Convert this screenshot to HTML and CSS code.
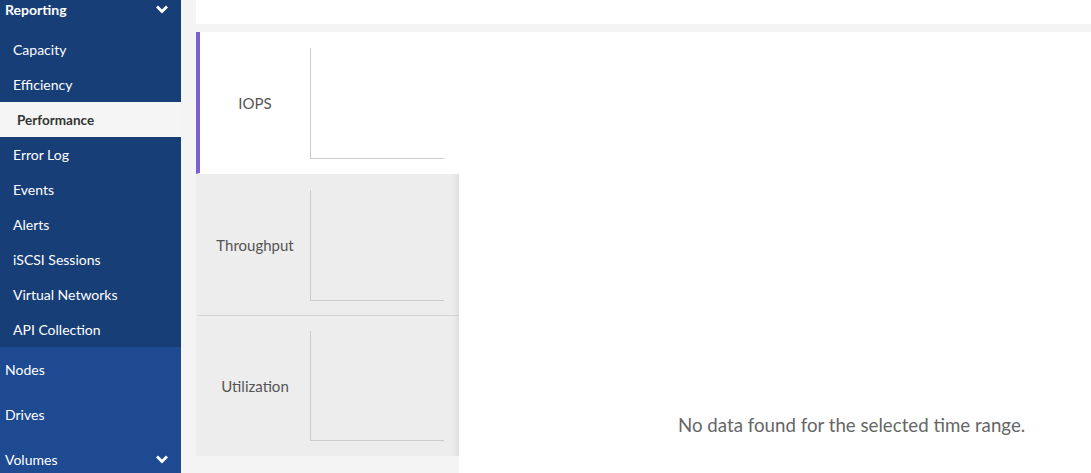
FILE: index.html
```html
<!DOCTYPE html>
<html>
<head>
<meta charset="utf-8">
<link rel="stylesheet" href="styles.css">
</head>
<body>
<aside class="sidebar">
  <nav class="nav">
    <div class="group">
      <div class="group-head"><span>Reporting</span>
        <svg class="chev" width="14" height="9" viewBox="0 0 14 9"><path d="M2 1.5 L7 6.5 L12 1.5" fill="none" stroke="#fff" stroke-width="2.8"/></svg>
      </div>
      <div class="sub">Capacity</div>
      <div class="sub">Efficiency</div>
      <div class="sub active">Performance</div>
      <div class="sub">Error Log</div>
      <div class="sub">Events</div>
      <div class="sub">Alerts</div>
      <div class="sub">iSCSI Sessions</div>
      <div class="sub">Virtual Networks</div>
      <div class="sub">API Collection</div>
    </div>
    <div class="top">Nodes</div>
    <div class="top">Drives</div>
    <div class="top"><span>Volumes</span>
      <svg class="chev" width="14" height="9" viewBox="0 0 14 9"><path d="M2 1.5 L7 6.5 L12 1.5" fill="none" stroke="#fff" stroke-width="2.8"/></svg>
    </div>
  </nav>
</aside>
<main class="main">
  <div class="topbar"></div>
  <div class="panel">
    <div class="tabs">
      <div class="tab active">
        <div class="tab-label">IOPS</div>
        <div class="axes"></div>
      </div>
      <div class="tab">
        <div class="tab-label">Throughput</div>
        <div class="axes"></div>
      </div>
      <div class="tab last">
        <div class="tab-label">Utilization</div>
        <div class="axes"></div>
      </div>
    </div>
    <div class="chart-area">
      <p class="empty">No data found for the selected time range.</p>
    </div>
  </div>
</main>
</body>
</html>
```

FILE: styles.css
```css
* { box-sizing: border-box; }
html, body { margin: 0; padding: 0; }
body {
  width: 1091px;
  height: 473px;
  overflow: hidden;
  display: flex;
  background: #f4f4f4;
  font-family: "Source Sans Pro", "Lato", "Liberation Sans", sans-serif;
}
.sidebar {
  width: 181px;
  flex: none;
  height: 473px;
  overflow: hidden;
  background: #1e4a91;
}
.nav {
  margin-top: -13px;
  display: flex;
  flex-direction: column;
}
.group { background: #173e77; }
.group-head, .top {
  height: 45px;
  display: flex;
  align-items: center;
  justify-content: space-between;
  padding: 0 12px 0 5px;
  color: #fff;
  font-size: 14px;
}
.group-head { font-weight: 700; }
.sub {
  height: 35px;
  display: flex;
  align-items: center;
  padding-left: 13px;
  color: #fff;
  font-size: 14px;
}
.sub.active {
  background: #f5f5f5;
  color: #333;
  font-weight: 700;
  padding-left: 17px;
  font-size: 13.5px;
}
.chev { display: block; }
.main {
  flex: 1;
  padding-left: 15px;
  display: flex;
  flex-direction: column;
}
.topbar {
  height: 24px;
  background: #fff;
  margin-bottom: 8px;
  flex: none;
}
.panel {
  flex: 1;
  display: flex;
}
.tabs {
  width: 263px;
  flex: none;
  background: #f4f4f4;
}
.tab {
  height: 142px;
  display: flex;
  background: #ededed;
  border-left: 4px solid #ededed;
  border-bottom: 1px solid #d2d2d2;
  box-shadow: inset -7px 0 6px -5px rgba(0,0,0,0.08);
  padding-top: 16px;
}
.tab.active {
  background: #fff;
  border-left-color: #7c5fd3;
  border-bottom-color: #fff;
  box-shadow: none;
}
.tab.last { height: 140px; border-bottom: none; padding-top: 15px; }
.tab-label {
  width: 110px;
  height: 110px;
  display: flex;
  align-items: center;
  justify-content: center;
  font-size: 15px;
  color: #555;
}
.axes {
  width: 134px;
  height: 111px;
  border-left: 1px solid #ccc;
  border-bottom: 1px solid #ccc;
}
.tab.last .axes { height: 110px; }
.chart-area {
  flex: 1;
  background: #fff;
  display: flex;
  align-items: flex-end;
  padding: 0 0 36px 219px;
}
.empty {
  margin: 0;
  font-size: 18.7px;
  line-height: 24px;
  color: #666;
  white-space: nowrap;
}
```
